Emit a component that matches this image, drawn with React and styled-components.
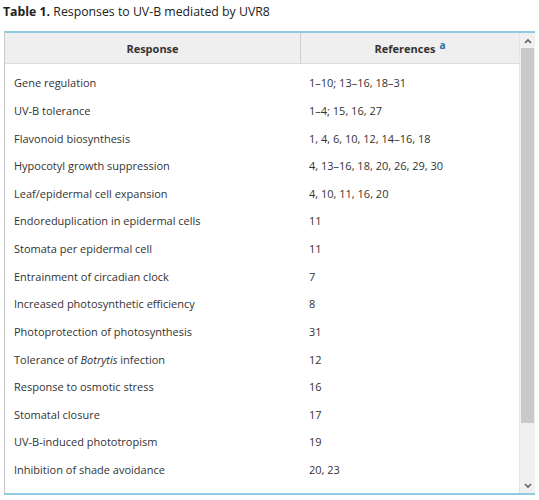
import { Fragment } from 'react'
import styled, { createGlobalStyle } from 'styled-components'

const rows = [
  ['Gene regulation', '1–10; 13–16, 18–31'],
  ['UV-B tolerance', '1–4; 15, 16, 27'],
  ['Flavonoid biosynthesis', '1, 4, 6, 10, 12, 14–16, 18'],
  ['Hypocotyl growth suppression', '4, 13–16, 18, 20, 26, 29, 30'],
  ['Leaf/epidermal cell expansion', '4, 10, 11, 16, 20'],
  ['Endoreduplication in epidermal cells', '11'],
  ['Stomata per epidermal cell', '11'],
  ['Entrainment of circadian clock', '7'],
  ['Increased photosynthetic efficiency', '8'],
  ['Photoprotection of photosynthesis', '31'],
  [
    <span>
      Tolerance of <i>Botrytis</i> infection
    </span>,
    '12',
  ],
  ['Response to osmotic stress', '16'],
  ['Stomatal closure', '17'],
  ['UV-B-induced phototropism', '19'],
  ['Inhibition of shade avoidance', '20, 23'],
]

const GlobalStyle = createGlobalStyle`
  body {
    margin: 0;
    background: #fff;
    font-family: "Open Sans", "Liberation Sans", sans-serif;
    color: #333;
  }
`

const Caption = styled.div`
  font-size: 12.3px;
  line-height: 24px;
  padding-left: 3px;
  color: #222;

  b {
    font-weight: 700;
  }
`

const Frame = styled.div`
  margin: 7px 4px 0 4px;
  height: 460px;
  display: flex;
  border-top: 2px solid #8ccbe0;
  border-bottom: 2px solid #8ccbe0;
  border-left: 1px solid #c9c9c9;
`

const Viewport = styled.div`
  flex: 1;
  overflow: hidden;
`

const Grid = styled.div`
  display: grid;
  grid-template-columns: 295px 1fr;
`

const HeadCell = styled.div`
  height: 30px;
  display: flex;
  align-items: center;
  justify-content: center;
  background: #efefef;
  border-bottom: 1px solid #dcdcdc;
  border-left: ${({ $divider }) => ($divider ? '1px solid #cfcfcf' : 'none')};
  font-size: 11px;
  font-weight: 700;
  color: #333;

  sup {
    color: #2d6aa3;
    font-size: 10px;
    margin-left: 4px;
    position: relative;
    top: -3px;
  }
`

const Spacer = styled.div`
  grid-column: 1 / -1;
  height: 5px;
`

const Cell = styled.div`
  height: 27.64px;
  display: flex;
  align-items: center;
  padding-left: 9px;
  font-size: 11px;
  color: #333;
  white-space: nowrap;
`

const Scrollbar = styled.div`
  width: 15px;
  display: flex;
  flex-direction: column;
  background: #f0f0f0;
  border-left: 1px solid #e4e4e4;
`

const Arrow = styled.div`
  height: 15px;
  display: flex;
  align-items: center;
  justify-content: center;
  background: #f0f0f0;
`

const Track = styled.div`
  flex: 1;
  display: flex;
  flex-direction: column;
`

const Thumb = styled.div`
  height: 375px;
  background: #c9c9c9;
  margin: 0 1px;
`

function Chevron({ up }) {
  return (
    <svg width="8" height="6" viewBox="0 0 8 6">
      <path
        d={up ? 'M1 5 L4 2 L7 5' : 'M1 1 L4 4 L7 1'}
        fill="none"
        stroke="#606060"
        strokeWidth="1.6"
      />
    </svg>
  )
}

export default function App() {
  return (
    <>
      <GlobalStyle />
      <Caption>
        <b>Table 1.</b> Responses to UV-B mediated by UVR8
      </Caption>
      <Frame>
        <Viewport>
          <Grid>
            <HeadCell>Response</HeadCell>
            <HeadCell $divider>
              References<sup>a</sup>
            </HeadCell>
            <Spacer />
            {rows.map(([response, refs], i) => (
              <Fragment key={i}>
                <Cell>{response}</Cell>
                <Cell>{refs}</Cell>
              </Fragment>
            ))}
          </Grid>
        </Viewport>
        <Scrollbar>
          <Arrow>
            <Chevron up />
          </Arrow>
          <Track>
            <Thumb />
          </Track>
          <Arrow>
            <Chevron />
          </Arrow>
        </Scrollbar>
      </Frame>
    </>
  )
}
